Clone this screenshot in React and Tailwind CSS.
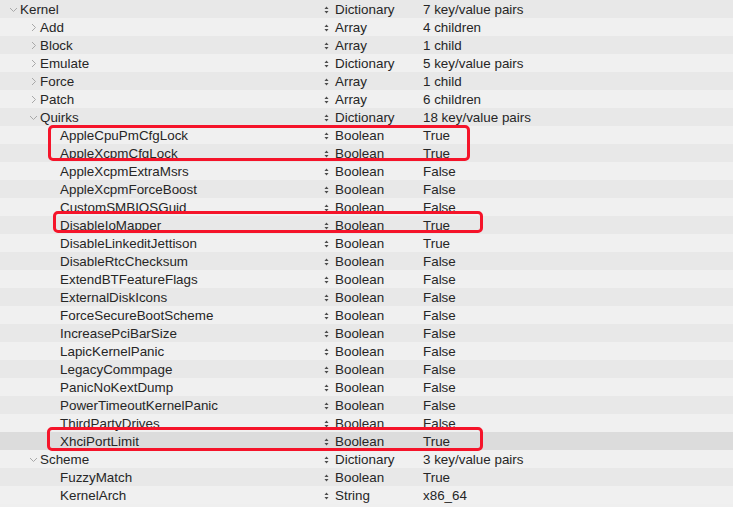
import React from 'react';

// rows: [key, depth, disclosure ('open' | 'closed' | null), type, value]
const ROWS = [
  ['Kernel', 0, 'open', 'Dictionary', '7 key/value pairs'],
  ['Add', 1, 'closed', 'Array', '4 children'],
  ['Block', 1, 'closed', 'Array', '1 child'],
  ['Emulate', 1, 'closed', 'Dictionary', '5 key/value pairs'],
  ['Force', 1, 'closed', 'Array', '1 child'],
  ['Patch', 1, 'closed', 'Array', '6 children'],
  ['Quirks', 1, 'open', 'Dictionary', '18 key/value pairs'],
  ['AppleCpuPmCfgLock', 2, null, 'Boolean', 'True'],
  ['AppleXcpmCfgLock', 2, null, 'Boolean', 'True'],
  ['AppleXcpmExtraMsrs', 2, null, 'Boolean', 'False'],
  ['AppleXcpmForceBoost', 2, null, 'Boolean', 'False'],
  ['CustomSMBIOSGuid', 2, null, 'Boolean', 'False'],
  ['DisableIoMapper', 2, null, 'Boolean', 'True'],
  ['DisableLinkeditJettison', 2, null, 'Boolean', 'True'],
  ['DisableRtcChecksum', 2, null, 'Boolean', 'False'],
  ['ExtendBTFeatureFlags', 2, null, 'Boolean', 'False'],
  ['ExternalDiskIcons', 2, null, 'Boolean', 'False'],
  ['ForceSecureBootScheme', 2, null, 'Boolean', 'False'],
  ['IncreasePciBarSize', 2, null, 'Boolean', 'False'],
  ['LapicKernelPanic', 2, null, 'Boolean', 'False'],
  ['LegacyCommpage', 2, null, 'Boolean', 'False'],
  ['PanicNoKextDump', 2, null, 'Boolean', 'False'],
  ['PowerTimeoutKernelPanic', 2, null, 'Boolean', 'False'],
  ['ThirdPartyDrives', 2, null, 'Boolean', 'False'],
  ['XhciPortLimit', 2, null, 'Boolean', 'True'],
  ['Scheme', 1, 'open', 'Dictionary', '3 key/value pairs'],
  ['FuzzyMatch', 2, null, 'Boolean', 'True'],
  ['KernelArch', 2, null, 'String', 'x86_64'],
];

const SELECTED = 24;

function Disclosure({ open }) {
  return (
    <svg width="9" height="9" viewBox="0 0 9 9" className="text-[#a8a8a8]">
      {open ? (
        <path d="M1 3 L4.5 6.5 L8 3" fill="none" stroke="currentColor" strokeWidth="1" />
      ) : (
        <path d="M3 1 L6.5 4.5 L3 8" fill="none" stroke="currentColor" strokeWidth="1" />
      )}
    </svg>
  );
}

function Stepper() {
  return (
    <svg width="5" height="8" viewBox="0 0 5 8" className="text-[#4a4a4a]">
      <path d="M2.5 0.5 L4.5 3 L0.5 3 Z" fill="currentColor" />
      <path d="M2.5 7.5 L4.5 5 L0.5 5 Z" fill="currentColor" />
    </svg>
  );
}

const indent = ['pl-[9px]', 'pl-[29px]', 'pl-[49px]'];

export default function App() {
  return (
    <div className="relative w-[733px] h-[507px] overflow-hidden bg-[#efefef] text-[13.4px] text-[#262626] font-['Liberation_Sans',Arial,sans-serif]">
      {ROWS.map(([key, depth, disc, type, value], i) => (
        <div
          key={key}
          className={`flex items-center h-[18px] leading-[18px] pt-[1px] ${
            i === SELECTED ? 'bg-[#dcdcdc]' : i % 2 === 0 ? 'bg-[#e8e8e8]' : 'bg-[#f0f0f0]'
          }`}
        >
          <div className={`w-[320px] flex items-center ${indent[depth]}`}>
            <span className="w-[11px] flex items-center">{disc && <Disclosure open={disc === 'open'} />}</span>
            <span>{key}</span>
          </div>
          <div className="w-[103px] flex items-center pl-[4px] gap-[6px]">
            <Stepper />
            <span>{type}</span>
          </div>
          <div className="flex-1">{value}</div>
        </div>
      ))}

      {/* annotation boxes */}
      <div className="absolute left-[48px] top-[125px] w-[422px] h-[36px] border-[3px] border-[#f5142a] rounded-[5px]" />
      <div className="absolute left-[53px] top-[211px] w-[430px] h-[22px] border-[3px] border-[#f5142a] rounded-[5px]" />
      <div className="absolute left-[47px] top-[427px] w-[436px] h-[24px] border-[3px] border-[#f5142a] rounded-[5px]" />
    </div>
  );
}
